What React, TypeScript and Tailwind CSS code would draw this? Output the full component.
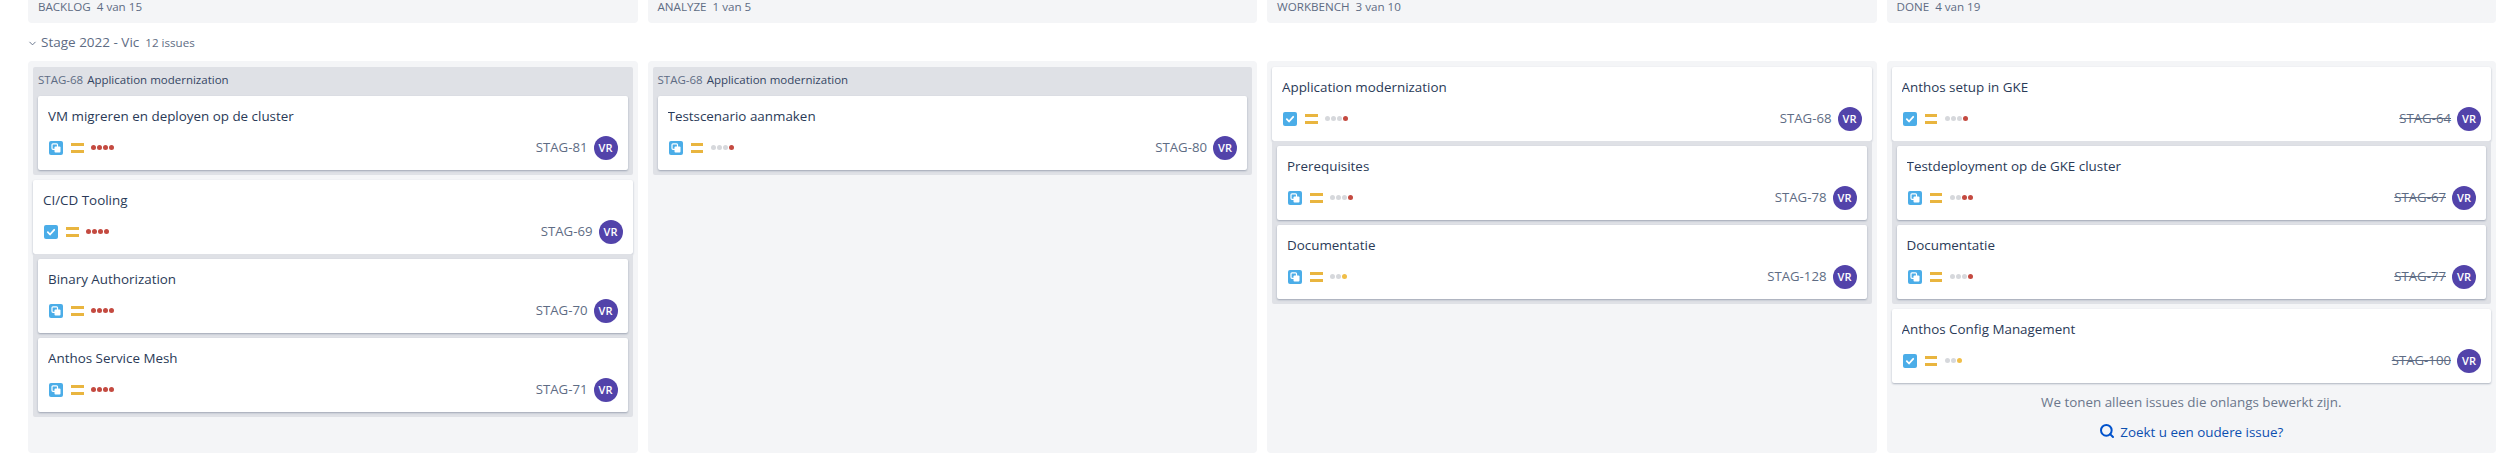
import React from "react";
import { Search, ChevronDown } from "lucide-react";

type Dot = "g" | "r" | "y";

type Issue = {
  title: string;
  issueKey: string;
  type: "task" | "subtask";
  dots: Dot[];
  done?: boolean;
};

const R4: Dot[] = ["r", "r", "r", "r"];
const G3R: Dot[] = ["g", "g", "g", "r"];
const G2R2: Dot[] = ["g", "g", "r", "r"];
const G2Y: Dot[] = ["g", "g", "y"];

function SubtaskIcon() {
  return (
    <svg width="14" height="14" viewBox="0 0 14 14" className="shrink-0">
      <rect width="14" height="14" rx="2" fill="#4bade8" />
      <rect x="3" y="2.8" width="5.5" height="5.5" rx="1" fill="#4bade8" stroke="#fff" strokeWidth="1.2" />
      <rect x="5.5" y="5.5" width="6" height="6" rx="1" fill="#fff" />
    </svg>
  );
}

function TaskIcon() {
  return (
    <svg width="14" height="14" viewBox="0 0 14 14" className="shrink-0">
      <rect width="14" height="14" rx="2" fill="#4bade8" />
      <path d="M3.8 7.2l2.2 2.3 4.2-4.7" fill="none" stroke="#fff" strokeWidth="1.8" strokeLinecap="round" strokeLinejoin="round" />
    </svg>
  );
}

function MediumPriority() {
  return (
    <div className="flex flex-col gap-[4px] w-[12.5px] shrink-0 -mt-px">
      <div className="h-[3px] bg-[#e9b53f]" />
      <div className="h-[3px] bg-[#e9b53f]" />
    </div>
  );
}

function Dots({ dots }: { dots: Dot[] }) {
  return (
    <div className="flex gap-px -mt-px">
      {dots.map((d, i) => (
        <span
          key={i}
          className={
            "w-[5px] h-[5px] rounded-full " +
            (d === "r" ? "bg-[#c44a40]" : d === "y" ? "bg-[#f0be48]" : "bg-[#d6d8dc]")
          }
        />
      ))}
    </div>
  );
}

function Card({ issue }: { issue: Issue }) {
  return (
    <div className="h-[74px] bg-white rounded-[2px] shadow-[0_1px_2px_rgba(9,30,66,0.3)] px-[10px] pt-[10px]">
      <div className="text-[13.4px] leading-[20px] text-[#2a3a57] truncate">{issue.title}</div>
      <div className="flex items-center mt-[10px] h-[24px] pl-px">
        {issue.type === "task" ? <TaskIcon /> : <SubtaskIcon />}
        <div className="ml-[8px]">
          <MediumPriority />
        </div>
        <div className="ml-[7.5px]">
          <Dots dots={issue.dots} />
        </div>
        <span className={"ml-auto text-[13.2px] text-[#5e6c84] " + (issue.done ? "line-through" : "")}>
          {issue.issueKey}
        </span>
        <div className="ml-[6px] w-[24px] h-[24px] rounded-full bg-[#5243aa] text-white text-[11px] font-semibold flex items-center justify-center">
          VR
        </div>
      </div>
    </div>
  );
}

function SubGroup({ header, issues }: { header?: boolean; issues: Issue[] }) {
  return (
    <div className="bg-[#dfe1e6] rounded-[2px] px-[5px] pb-[5px] flex flex-col gap-[5px]">
      {header ? (
        <div className="h-[29px] pb-[3px] flex items-center gap-[4px] text-[11.5px] -mb-[5px]">
          <span className="text-[#5e6c84]">STAG-68</span>
          <span className="text-[#344563]">Application modernization</span>
        </div>
      ) : (
        <div className="h-0" />
      )}
      {issues.map((it) => (
        <Card key={it.issueKey} issue={it} />
      ))}
    </div>
  );
}

const columns = [
  { name: "BACKLOG", count: "4 van 15" },
  { name: "ANALYZE", count: "1 van 5" },
  { name: "WORKBENCH", count: "3 van 10" },
  { name: "DONE", count: "4 van 19" },
];

export default function App() {
  return (
    <div className="w-[2518px] h-[462px] overflow-hidden bg-white pl-[28px] pr-[22px] font-['Open_Sans',sans-serif]">
      {/* column headers */}
      <div className="grid grid-cols-4 gap-[10px] h-[23px]">
        {columns.map((c) => (
          <div key={c.name} className="bg-[#f4f5f7] rounded-b-[4px] pl-[10px] text-[11.6px] leading-[13px] text-[#5e6c84]">
            {c.name} <span className="ml-[3px]">{c.count}</span>
          </div>
        ))}
      </div>

      {/* swimlane title */}
      <div className="h-[38px] pt-px flex items-center text-[#5e6c84]">
        <ChevronDown size={11} strokeWidth={2} className="ml-[-1.5px] mr-[3.5px] mt-[2px]" />
        <span className="text-[13.5px]">Stage 2022 - Vic</span>
        <span className="text-[11.6px] ml-[6px]">12 issues</span>
      </div>

      {/* board */}
      <div className="grid grid-cols-4 gap-[10px] h-[392px]">
        <div className="bg-[#f4f5f7] rounded-[4px] px-[5px] pt-[6px] flex flex-col gap-[5px]">
          <SubGroup header issues={[{ title: "VM migreren en deployen op de cluster", issueKey: "STAG-81", type: "subtask", dots: R4 }]} />
          <div>
            <Card issue={{ title: "CI/CD Tooling", issueKey: "STAG-69", type: "task", dots: R4 }} />
            <SubGroup
              issues={[
                { title: "Binary Authorization", issueKey: "STAG-70", type: "subtask", dots: R4 },
                { title: "Anthos Service Mesh", issueKey: "STAG-71", type: "subtask", dots: R4 },
              ]}
            />
          </div>
        </div>

        <div className="bg-[#f4f5f7] rounded-[4px] px-[5px] pt-[6px]">
          <SubGroup header issues={[{ title: "Testscenario aanmaken", issueKey: "STAG-80", type: "subtask", dots: G3R }]} />
        </div>

        <div className="bg-[#f4f5f7] rounded-[4px] px-[5px] pt-[6px]">
          <Card issue={{ title: "Application modernization", issueKey: "STAG-68", type: "task", dots: G3R }} />
          <SubGroup
            issues={[
              { title: "Prerequisites", issueKey: "STAG-78", type: "subtask", dots: G3R },
              { title: "Documentatie", issueKey: "STAG-128", type: "subtask", dots: G2Y },
            ]}
          />
        </div>

        <div className="bg-[#f4f5f7] rounded-[4px] px-[5px] pt-[6px]">
          <Card issue={{ title: "Anthos setup in GKE", issueKey: "STAG-64", type: "task", dots: G3R, done: true }} />
          <SubGroup
            issues={[
              { title: "Testdeployment op de GKE cluster", issueKey: "STAG-67", type: "subtask", dots: G2R2, done: true },
              { title: "Documentatie", issueKey: "STAG-77", type: "subtask", dots: G3R, done: true },
            ]}
          />
          <div className="mt-[5px]">
            <Card issue={{ title: "Anthos Config Management", issueKey: "STAG-100", type: "task", dots: G2Y, done: true }} />
          </div>
          <div className="mt-[9px] text-center text-[13.4px] leading-[20px] text-[#6b778c]">
            We tonen alleen issues die onlangs bewerkt zijn.
          </div>
          <div className="mt-[10px] flex items-center justify-center gap-[5px] text-[13.4px] leading-[20px] text-[#0c4fb0]">
            <Search size={16} strokeWidth={3} className="-mt-[3px] text-[#0052cc]" />
            Zoekt u een oudere issue?
          </div>
        </div>
      </div>
    </div>
  );
}
